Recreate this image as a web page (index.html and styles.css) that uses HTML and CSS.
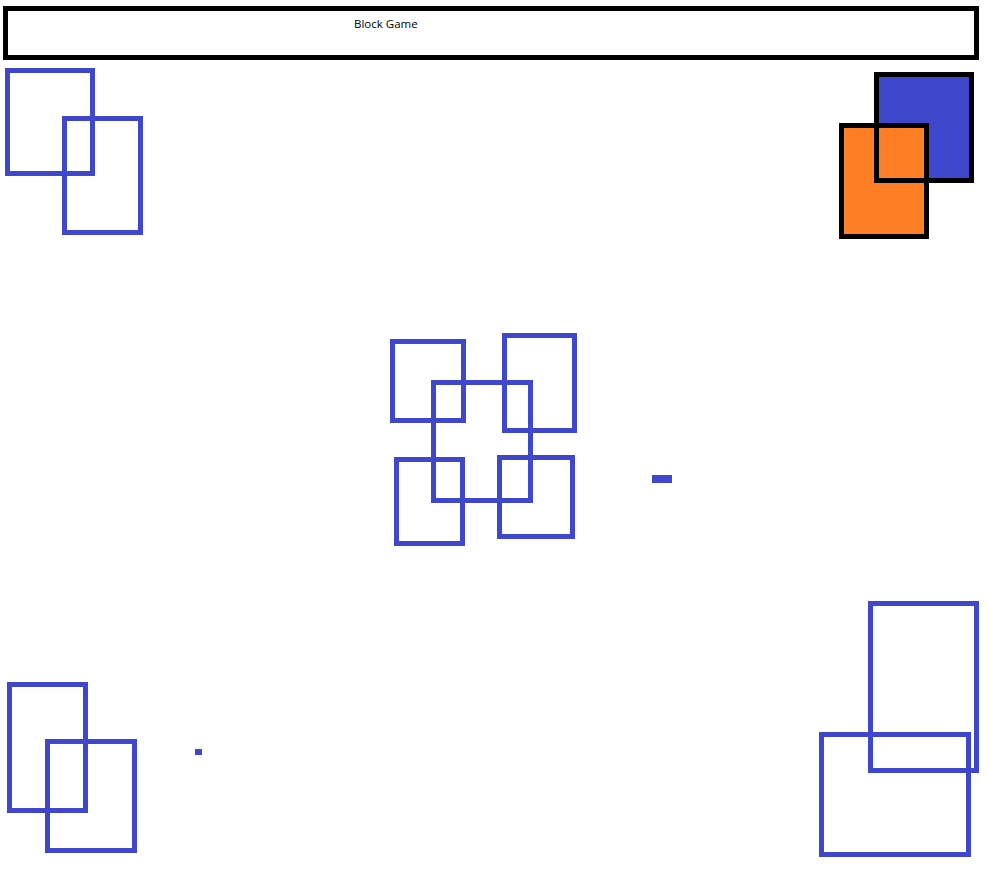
FILE: index.html
```html
<!DOCTYPE html>
<html>

<head>
  <title>Block Game</title>
  <link rel="stylesheet" href="styles.css">
</head>

<body>
  <main class="page">
    <header class="game-title">Block Game</header>

    <!-- player blocks -->
    <div class="fill fill-blue" style="left: 874px; top: 72px; width: 100px; height: 111px;"></div>
    <div class="fill fill-orange" style="left: 839px; top: 123px; width: 90px; height: 116px;"></div>
    <div class="frame" style="left: 874px; top: 72px; width: 100px; height: 111px;"></div>
    <div class="frame" style="left: 839px; top: 123px; width: 90px; height: 116px;"></div>

    <!-- obstacles -->
    <div class="block" style="left: 5px; top: 68px; width: 90px; height: 108px;"></div>
    <div class="block" style="left: 62px; top: 116px; width: 81px; height: 119px;"></div>

    <div class="block" style="left: 390px; top: 339px; width: 76px; height: 84px;"></div>
    <div class="block" style="left: 502px; top: 333px; width: 75px; height: 100px;"></div>
    <div class="block" style="left: 431px; top: 380px; width: 102px; height: 123px;"></div>
    <div class="block" style="left: 394px; top: 457px; width: 71px; height: 89px;"></div>
    <div class="block" style="left: 497px; top: 455px; width: 78px; height: 84px;"></div>

    <div class="block" style="left: 7px; top: 682px; width: 81px; height: 131px;"></div>
    <div class="block" style="left: 45px; top: 739px; width: 92px; height: 114px;"></div>

    <div class="block" style="left: 868px; top: 601px; width: 111px; height: 172px;"></div>
    <div class="block" style="left: 819px; top: 732px; width: 152px; height: 125px;"></div>

    <!-- pickups -->
    <div class="dot" style="left: 652px; top: 475px; width: 20px; height: 8px;"></div>
    <div class="dot" style="left: 195px; top: 749px; width: 7px; height: 6px;"></div>
  </main>
</body>

</html>
```

FILE: styles.css
```css
body {
  margin: 0;
  background-color: white;
  font-family: "Open Sans", Arial, sans-serif;
}

.page {
  position: relative;
  width: 989px;
  height: 891px;
  overflow: hidden;
}

.game-title {
  box-sizing: border-box;
  height: 54px;
  margin: 6px 10px 0px 3px;
  padding: 5px 0px 0px 346px;
  border: 5px solid black;
  font-size: 11.5px;
  line-height: 16px;
  color: black;
}

.block,
.frame,
.fill,
.dot {
  position: absolute;
  box-sizing: border-box;
}

.block {
  border: 5px solid #3f48cc;
}

.frame {
  border: 5px solid black;
}

.fill-blue {
  background-color: #3f48cc;
}

.fill-orange {
  background-color: #ff7f27;
}

.dot {
  background-color: #3f48cc;
}
```
